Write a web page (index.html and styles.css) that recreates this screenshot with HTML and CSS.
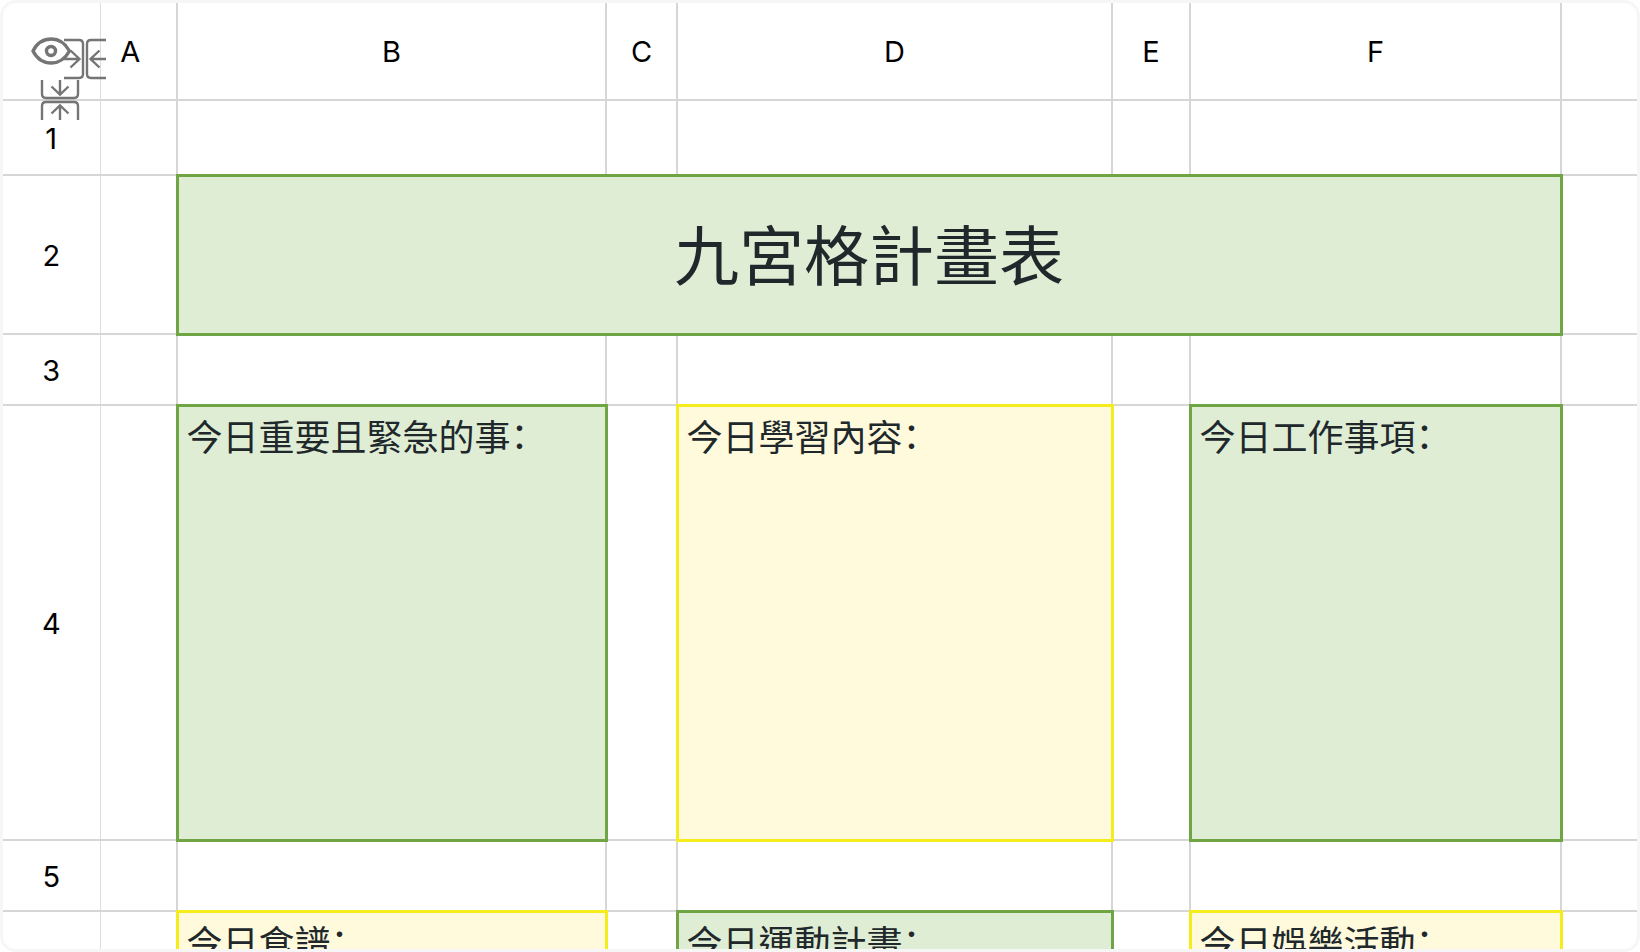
FILE: index.html
```html
<!DOCTYPE html>
<html lang="zh-Hant">
<head>
    <meta charset="UTF-8">
    <meta name="viewport" content="width=device-width, initial-scale=1.0">
    <title>九宮格計畫表</title>
    <link rel="stylesheet" href="styles.css">
</head>
<body>
    <div class="sheet">
        <table class="grid">
            <colgroup>
                <col class="col-index">
                <col class="col-a">
                <col class="col-b">
                <col class="col-c">
                <col class="col-d">
                <col class="col-e">
                <col class="col-f">
                <col>
            </colgroup>
            <thead>
                <tr class="row-head">
                    <td class="corner">
                        <button type="button" class="tool tool-eye" aria-label="顯示">
                            <svg width="40" height="28" viewBox="0 0 40 28">
                                <path d="M2 14 C6 6 13 2 20.500 2 C28 2 34 6 38.500 14 C34 22 28 26 20.500 26 C13 26 6 22 2 14 Z" stroke-width="3.400"/>
                                <circle cx="20" cy="14" r="4.500" stroke-width="3.400"/>
                            </svg>
                        </button>
                        <button type="button" class="tool tool-cols" aria-label="收合欄">
                            <svg width="42" height="42" viewBox="0 0 42 42">
                                <path d="M0 2 H15 Q19 2 19 6 V36 Q19 40 15 40 H0 M42 2 H27 Q23 2 23 6 V36 Q23 40 27 40 H42"/>
                                <path d="M0 21 H15 M6.500 12.500 L15.500 21 L6.500 29.500 M42 21 H27 M35.500 12.500 L26.500 21 L35.500 29.500"/>
                            </svg>
                        </button>
                        <button type="button" class="tool tool-rows" aria-label="收合列">
                            <svg width="40" height="40" viewBox="0 0 40 40">
                                <path d="M2 0 V14 Q2 18 6 18 H34 Q38 18 38 14 V0 M2 40 V26 Q2 22 6 22 H34 Q38 22 38 26 V40"/>
                                <path d="M20 0 V14 M11.500 6.500 L20 14.500 L28.500 6.500 M20 40 V26 M11.500 33.500 L20 25.500 L28.500 33.500"/>
                            </svg>
                        </button>
                    </td>
                    <th scope="col" class="col-hidden">A</th>
                    <th scope="col">B</th>
                    <th scope="col">C</th>
                    <th scope="col">D</th>
                    <th scope="col">E</th>
                    <th scope="col">F</th>
                    <td></td>
                </tr>
            </thead>
            <tbody>
                <tr class="row-first">
                    <th scope="row">1</th>
                    <td></td>
                    <td></td>
                    <td></td>
                    <td></td>
                    <td></td>
                    <td></td>
                    <td></td>
                </tr>
                <tr class="row-title">
                    <th scope="row">2</th>
                    <td></td>
                    <td colspan="5" class="title green">九宮格計畫表</td>
                    <td></td>
                </tr>
                <tr class="row-gap">
                    <th scope="row">3</th>
                    <td></td>
                    <td></td>
                    <td></td>
                    <td></td>
                    <td></td>
                    <td></td>
                    <td></td>
                </tr>
                <tr class="row-plan">
                    <th scope="row">4</th>
                    <td></td>
                    <td class="plan green">今日重要且緊急的事：</td>
                    <td></td>
                    <td class="plan yellow">今日學習內容：</td>
                    <td></td>
                    <td class="plan green">今日工作事項：</td>
                    <td></td>
                </tr>
                <tr class="row-gap">
                    <th scope="row">5</th>
                    <td></td>
                    <td></td>
                    <td></td>
                    <td></td>
                    <td></td>
                    <td></td>
                    <td></td>
                </tr>
                <tr class="row-plan">
                    <th scope="row"></th>
                    <td></td>
                    <td class="plan yellow">今日食譜：</td>
                    <td></td>
                    <td class="plan green">今日運動計畫：</td>
                    <td></td>
                    <td class="plan yellow">今日娛樂活動：</td>
                    <td></td>
                </tr>
            </tbody>
        </table>
    </div>
</body>
</html>
```
FILE: styles.css
```css
* {
    box-sizing: border-box;
}

body {
    margin: 0;
    background: #ffffff;
    color: #000000;
    font-family: Inter, "Noto Sans CJK TC", sans-serif;
}

.sheet {
    height: 100vh;
    overflow: hidden;
    border: 3px solid #f6f6f6;
    border-radius: 16px;
    background: #ffffff;
}

.grid {
    width: 100%;
    table-layout: fixed;
    border-collapse: collapse;
}

.col-index { width: 97px; }
.col-a { width: 77px; }
.col-b { width: 429px; }
.col-c { width: 71px; }
.col-d { width: 435px; }
.col-e { width: 78px; }
.col-f { width: 371px; }

.row-head { height: 97px; }
.row-first { height: 75px; }
.row-title { height: 159px; }
.row-gap { height: 71px; }
.row-plan { height: 435px; }

th,
td {
    padding: 0;
    border-right: 2px solid #d6d6d6;
    border-bottom: 2px solid #d6d6d6;
}

th {
    padding-top: 2px;
    font-size: 29px;
    font-weight: 400;
    line-height: 36px;
    text-align: center;
}

tr > :first-child {
    border-right: 1px solid #dddddd;
}

tr > :last-child {
    border-right: none;
}

.col-hidden {
    padding-right: 16px;
}

/* coloured cells, wider border wins over the grid lines */
td.green {
    border: 3px solid #6fa544;
    background: #e0edd5;
}

td.yellow {
    border: 3px solid #f4ec1c;
    background: #fffadc;
}

.title {
    padding-top: 4px;
    color: #20282b;
    font-size: 65px;
    line-height: 80px;
    text-align: center;
}

.plan {
    padding: 6px 8px;
    color: #20282b;
    font-family: "Noto Sans CJK TC", sans-serif;
    font-size: 36px;
    /* half-width colon */
    font-feature-settings: "halt";
    line-height: 44px;
    vertical-align: top;
}

/* corner tools */
.corner {
    position: relative;
}

.tool {
    position: absolute;
    padding: 0;
    border: none;
    background: none;
    cursor: pointer;
}

.tool svg {
    display: block;
    fill: none;
    stroke: #757575;
    stroke-width: 2.4;
}

.tool-eye {
    top: 34px;
    left: 28px;
}

.tool-cols {
    top: 35px;
    left: 61px;
}

.tool-rows {
    top: 77px;
    left: 37px;
}
```
